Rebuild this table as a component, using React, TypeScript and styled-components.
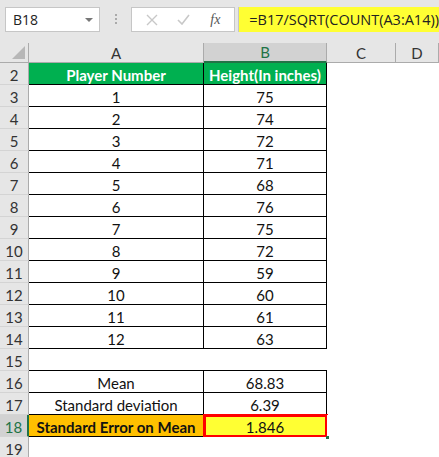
import styled, { createGlobalStyle, css } from 'styled-components';

const GlobalStyle = createGlobalStyle`
  body {
    margin: 0;
    background: #ffffff;
    font-family: Lato, "Liberation Sans", sans-serif;
  }
`;

const Page = styled.div`
  width: 439px;
  height: 457px;
  overflow: hidden;
  background: #ffffff;
`;

const Toolbar = styled.div`
  display: flex;
  align-items: flex-start;
  height: 43px;
  padding: 7px 0 0 5px;
  box-sizing: border-box;
  background: #e6e6e6;
`;

const NameBox = styled.div`
  display: flex;
  align-items: center;
  justify-content: space-between;
  width: 101px;
  height: 25px;
  box-sizing: border-box;
  padding: 0 6px 0 7px;
  background: #fff;
  border: 1px solid #c6c6c6;
  font-family: "Open Sans", "Noto Sans", sans-serif;
  font-size: 14px;
  color: #222;
`;

const Caret = styled.span`
  width: 0;
  height: 0;
  border-left: 4px solid transparent;
  border-right: 4px solid transparent;
  border-top: 4px solid #777;
`;

const Dots = styled.div`
  display: flex;
  flex-direction: column;
  gap: 2px;
  margin: 7px 0 0 15px;

  span {
    width: 2px;
    height: 2px;
    background: #aaa;
  }
`;

const FxBox = styled.div`
  display: flex;
  align-items: center;
  justify-content: space-around;
  width: 112px;
  height: 25px;
  margin-left: 14px;
  box-sizing: border-box;
  background: #fff;
  border: 1px solid #c6c6c6;
  padding: 0 4px;
`;

const FxLabel = styled.span`
  font-family: "Liberation Serif", serif;
  font-style: italic;
  font-size: 14px;
  color: #555;
`;

const FormulaInput = styled.div`
  flex: 1;
  height: 25px;
  margin-left: 3px;
  box-sizing: border-box;
  display: flex;
  align-items: center;
  padding-left: 10px;
  background: #ffff33;
  border-left: 1px solid #c6c6c6;
  font-family: "Open Sans", "Noto Sans", sans-serif;
  font-size: 14.5px;
  color: #222;
  white-space: nowrap;
`;

const Sheet = styled.div`
  display: grid;
  grid-template-columns: 29px 175px 123px 69px 1fr;
  grid-template-rows: 20px;
  grid-auto-rows: 22px;
  font-size: 15px;
  color: #111;
`;

const Corner = styled.div`
  display: flex;
  align-items: flex-end;
  justify-content: flex-end;
  padding: 0 3px 3px 0;
  background: #e6e6e6;
  border-right: 1px solid #ababab;
  border-bottom: 1px solid #ababab;
  box-sizing: border-box;

  span {
    width: 0;
    height: 0;
    border-left: 13px solid transparent;
    border-bottom: 13px solid #b7b7b7;
  }
`;

const ColHeader = styled.div<{ $active?: boolean }>`
  display: flex;
  align-items: center;
  justify-content: center;
  box-sizing: border-box;
  background: ${(p) => (p.$active ? '#d2d2d2' : '#e6e6e6')};
  color: ${(p) => (p.$active ? '#217346' : '#333')};
  border-right: 1px solid #ababab;
  border-bottom: ${(p) => (p.$active ? '2px solid #217346' : '1px solid #ababab')};
  font-size: 15px;
`;

const RowHeader = styled.div<{ $active?: boolean }>`
  display: flex;
  align-items: center;
  justify-content: center;
  padding-top: 2px;
  box-sizing: border-box;
  background: ${(p) => (p.$active ? '#d2d2d2' : '#e6e6e6')};
  color: ${(p) => (p.$active ? '#217346' : '#333')};
  border-right: ${(p) => (p.$active ? '2px solid #217346' : '1px solid #ababab')};
  border-bottom: 1px solid #d4d4d4;
  font-size: 15px;
`;

type Fill = 'green' | 'orange' | 'yellow';

const fills: Record<Fill, string> = {
  green: '#00b050',
  orange: '#ffc000',
  yellow: '#ffff33',
};

const Cell = styled.div<{ $fill?: Fill; $bold?: boolean; $right?: boolean; $bottom?: boolean; $selected?: boolean }>`
  position: relative;
  display: flex;
  align-items: center;
  justify-content: center;
  padding-top: 2px;
  box-sizing: border-box;
  white-space: nowrap;
  background: ${(p) => (p.$fill ? fills[p.$fill] : '#fff')};
  color: ${(p) => (p.$fill === 'green' ? '#fff' : '#111')};
  font-weight: ${(p) => (p.$bold ? 700 : 400)};
  border-right: ${(p) => (p.$right ? '1px solid #000' : 'none')};
  border-bottom: ${(p) => (p.$bottom ? '1px solid #000' : 'none')};

  ${(p) =>
    p.$selected &&
    css`
      &::after {
        content: '';
        position: absolute;
        inset: -1px -2px -2px -1px;
        border: 3px solid #ff0000;
      }
      &::before {
        content: '';
        position: absolute;
        right: -3px;
        bottom: -3px;
        width: 3px;
        height: 3px;
        background: #217346;
        z-index: 1;
      }
    `}
`;

type Row = {
  n: number;
  a?: string;
  b?: string;
  kind: 'head' | 'data' | 'gap' | 'result' | 'blank';
};

const heights = [75, 74, 72, 71, 68, 76, 75, 72, 59, 60, 61, 63];

const rows: Row[] = [
  { n: 2, a: 'Player Number', b: 'Height(In inches)', kind: 'head' },
  ...heights.map((h, i) => ({ n: i + 3, a: String(i + 1), b: String(h), kind: 'data' as const })),
  { n: 15, kind: 'gap' },
  { n: 16, a: 'Mean', b: '68.83', kind: 'data' },
  { n: 17, a: 'Standard deviation', b: '6.39', kind: 'data' },
  { n: 18, a: 'Standard Error on Mean', b: '1.846', kind: 'result' },
  { n: 19, kind: 'blank' },
];

const SheetRow = ({ row }: { row: Row }) => {
  const boxed = row.kind === 'head' || row.kind === 'data' || row.kind === 'result';
  const bottom = boxed || row.kind === 'gap';
  return (
    <>
      <RowHeader $active={row.kind === 'result'}>{row.n}</RowHeader>
      <Cell
        $fill={row.kind === 'head' ? 'green' : row.kind === 'result' ? 'orange' : undefined}
        $bold={row.kind === 'head' || row.kind === 'result'}
        $right={boxed}
        $bottom={bottom}
      >
        {row.a}
      </Cell>
      <Cell
        $fill={row.kind === 'head' ? 'green' : row.kind === 'result' ? 'yellow' : undefined}
        $bold={row.kind === 'head'}
        $right={boxed}
        $bottom={bottom}
        $selected={row.kind === 'result'}
      >
        {row.b}
      </Cell>
      <Cell />
      <Cell />
    </>
  );
};

const CrossIcon = () => (
  <svg width="12" height="12" viewBox="0 0 12 12">
    <path d="M1 1 L11 11 M11 1 L1 11" stroke="#c8c8c8" strokeWidth="1.4" fill="none" />
  </svg>
);

const CheckIcon = () => (
  <svg width="13" height="11" viewBox="0 0 13 11">
    <path d="M1 6 L5 10 L12 1" stroke="#c8c8c8" strokeWidth="1.6" fill="none" />
  </svg>
);

export default function App() {
  return (
    <Page>
      <GlobalStyle />
      <Toolbar>
        <NameBox>
          B18
          <Caret />
        </NameBox>
        <Dots>
          <span />
          <span />
          <span />
        </Dots>
        <FxBox>
          <CrossIcon />
          <CheckIcon />
          <FxLabel>fx</FxLabel>
        </FxBox>
        <FormulaInput>=B17/SQRT(COUNT(A3:A14))</FormulaInput>
      </Toolbar>
      <Sheet>
        <Corner>
          <span />
        </Corner>
        <ColHeader>A</ColHeader>
        <ColHeader $active>B</ColHeader>
        <ColHeader>C</ColHeader>
        <ColHeader>D</ColHeader>
        {rows.map((r) => (
          <SheetRow key={r.n} row={r} />
        ))}
      </Sheet>
    </Page>
  );
}
